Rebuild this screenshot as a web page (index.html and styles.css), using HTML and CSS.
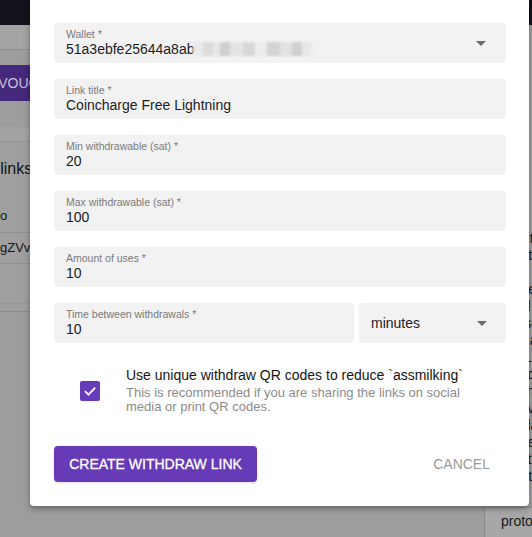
FILE: index.html
```html
<!DOCTYPE html>
<html lang="en">
<head>
<meta charset="utf-8">
<title>Create withdraw link</title>
<link rel="stylesheet" href="styles.css">
</head>
<body>
<div class="page">
  <header class="topbar"></header>
  <div class="main">
    <div class="left">
      <div class="scroller">
        <div class="toolbar"></div>
        <div class="btn-row"><span class="bg-btn">QUICK VOUCHERS</span></div>
        <div class="band"></div>
        <div class="bg-card">
          <div class="bg-title">Withdraw links</div>
          <div class="bg-row bg-row-first">o</div>
          <div class="bg-row">gZVv...</div>
          <div class="bg-row bg-row-empty"></div>
        </div>
      </div>
    </div>
    <div class="right">
      <div class="side-card">
        <p class="side-text">LNbits withdraw links let you create LNURL-withdraw links that can be shared or printed. Each link holds a fixed amount and a number of uses. Links can be used with any wallet that supports the LNURL-withdraw standard. Use unique codes when sharing links publicly so every QR code can only be claimed once by the holder. For more information see the LNURL specification and the documentation of the</p>
      </div>
      <div class="side-card side-bottom">
        <p class="side-text">protocol</p>
      </div>
    </div>
  </div>
</div>

<div class="dialog">
  <form class="form">
    <div class="field select">
      <div class="field-body">
        <div class="label">Wallet *</div>
        <div class="value">51a3ebfe25644a8ab<span class="blur"></span></div>
      </div>
      <span class="arrow"></span>
    </div>
    <div class="field">
      <div class="field-body">
        <div class="label">Link title *</div>
        <div class="value">Coincharge Free Lightning</div>
      </div>
    </div>
    <div class="field">
      <div class="field-body">
        <div class="label">Min withdrawable (sat) *</div>
        <div class="value">20</div>
      </div>
    </div>
    <div class="field">
      <div class="field-body">
        <div class="label">Max withdrawable (sat) *</div>
        <div class="value">100</div>
      </div>
    </div>
    <div class="field">
      <div class="field-body">
        <div class="label">Amount of uses *</div>
        <div class="value">10</div>
      </div>
    </div>
    <div class="row">
      <div class="field grow">
        <div class="field-body">
          <div class="label">Time between withdrawals *</div>
          <div class="value">10</div>
        </div>
      </div>
      <div class="field select unit">
        <div class="field-body center">
          <div class="value">minutes</div>
        </div>
        <span class="arrow"></span>
      </div>
    </div>

    <div class="check-item">
      <span class="checkbox">
        <svg viewBox="0 0 20 20" width="20" height="20"><path d="M5 10.2 L8.5 13.6 L15.2 6.6" fill="none" stroke="#fff" stroke-width="1.8"/></svg>
      </span>
      <div class="check-text">
        <div class="check-title">Use unique withdraw QR codes to reduce `assmilking`</div>
        <div class="check-caption">This is recommended if you are sharing the links on social media or print QR codes.</div>
      </div>
    </div>

    <div class="actions">
      <button type="button" class="btn primary">CREATE WITHDRAW LINK</button>
      <button type="button" class="btn flat">CANCEL</button>
    </div>
  </form>
</div>
</body>
</html>
```

FILE: styles.css
```css
* { box-sizing: border-box; }
html, body { margin: 0; padding: 0; }
body {
  width: 532px;
  height: 537px;
  overflow: hidden;
  position: relative;
  font-family: "Liberation Sans", Arial, sans-serif;
  background: #9d9d9d;
}

/* dimmed page behind the dialog */
.page { width: 532px; height: 537px; display: flex; flex-direction: column; }
.topbar { height: 25px; background: #13131d; flex: none; }
.main { flex: 1; display: flex; min-height: 0; }
.left { width: 484px; flex: none; overflow: hidden; }
.scroller { margin-left: -87px; }
.toolbar { height: 25px; background: #a4a4a4; border-bottom: 1px solid #8e8e8e; }
.btn-row { padding: 15px 0 0 21px; height: 77px; }
.bg-btn {
  display: inline-block; height: 36px; line-height: 36px; padding: 0 16px;
  background: #43287c; color: #c9c0dd; font-size: 14px; border-radius: 3px;
  white-space: nowrap;
}
.band { height: 15px; background: #a2a2a2; border-bottom: 1px solid #959595; }
.bg-card { background: #9f9f9f; padding: 17px 0 0 0; height: 170px; border-bottom: 1px solid #8c8c8c; }
.bg-title { padding-left: 16px; font-size: 16px; color: #141414; height: 42px; line-height: 20px; }
.bg-row { padding-left: 87px; font-size: 13px; color: #151515; height: 31px; line-height: 30px; border-bottom: 1px solid #8f8f8f; }
.bg-row-first { margin-top: 4px; height: 28px; line-height: 22px; }
.bg-row-empty { border-bottom: 1px solid #969696; height: 40px; }

.right { flex: 1; min-width: 0; display: flex; flex-direction: column; overflow: hidden; }
.side-card { flex: 1; padding: 205px 0 0 16px; border-left: 1px solid #8a8a8a; background: #9f9f9f; overflow: hidden; }
.side-text { margin: 0; font-size: 14px; line-height: 17px; color: #1a1a1a; width: 180px; }
.side-bottom { flex: none; height: 30px; padding: 5px 0 0 16px; background: #a7a7a7; border-top: 1px solid #8f8f8f; }

/* dialog */
.dialog {
  position: absolute;
  left: 30px;
  top: 0;
  width: 499px;
  background: #fff;
  border-radius: 0 0 4px 4px;
  box-shadow: 0 2px 4px -1px rgba(0,0,0,.2), 0 4px 5px rgba(0,0,0,.14), 0 1px 10px rgba(0,0,0,.12);
  padding: 23px 23px 24px 24px;
}
.form { display: flex; flex-direction: column; gap: 16px; }
.field {
  height: 40px;
  background: #f2f2f2;
  border-radius: 4px;
  display: flex;
  align-items: stretch;
  padding: 0 12px;
}
.field-body { flex: 1; padding-top: 5px; min-width: 0; }
.field-body.center { padding-top: 0; display: flex; align-items: center; }
.label { font-size: 10.5px; line-height: 12px; color: #7a7a7a; height: 12px; white-space: nowrap; }
.value { font-size: 14px; line-height: 16px; color: #1d1d1d; margin-top: 1px; white-space: nowrap; display: flex; align-items: center; }
.field-body.center .value { margin-top: 0; }
.blur {
  display: inline-block;
  width: 124px;
  height: 14px;
  margin-left: -1px;
  background: linear-gradient(90deg,
    #e9e9e9 0 8%, #dcdcdc 8% 16%, #e6e6e6 16% 22%, #cfcfcf 22% 30%,
    #e4e4e4 30% 40%, #d8d8d8 40% 50%, #ececec 50% 60%, #d4d4d4 60% 70%,
    #e2e2e2 70% 80%, #d0d0d0 80% 88%, #e8e8e8 88% 95%, #f0f0f0 95% 100%);
  filter: blur(1.2px);
}
.arrow {
  align-self: center;
  width: 0; height: 0;
  border-left: 5px solid transparent;
  border-right: 5px solid transparent;
  border-top: 5px solid #6b6b6b;
  margin-right: 8px;
}
.row { display: flex; gap: 5px; }
.grow { flex: 1; }
.unit { width: 147px; flex: none; }
.unit .arrow { margin-right: 7px; }

.check-item { display: flex; align-items: center; margin-top: 8px; padding-left: 26px; gap: 26px; }
.checkbox {
  width: 20px; height: 20px; flex: none;
  background: #673ab7; border-radius: 2px;
  display: flex; align-items: center; justify-content: center;
}
.checkbox svg { display: block; }
.check-text { flex: none; width: 345px; }
.check-title { font-size: 14px; line-height: 16px; color: #151515; white-space: nowrap; }
.check-caption { font-size: 13px; line-height: 14px; color: #8b8b8b; margin-top: 3px; }

.actions { display: flex; justify-content: space-between; align-items: center; margin-top: 16px; }
.btn {
  font-family: "Liberation Sans", Arial, sans-serif;
  font-size: 14px; height: 36px; border: 0; border-radius: 4px;
  padding: 0 16px; cursor: pointer; white-space: nowrap;
}
.primary { background: #673ab7; color: #fff; width: 203px; padding: 0; text-align: center; box-shadow: 0 1px 3px rgba(0,0,0,.15); -webkit-text-stroke: 0.3px #fff; }
.flat { background: transparent; color: #9a9a9a; }
```
